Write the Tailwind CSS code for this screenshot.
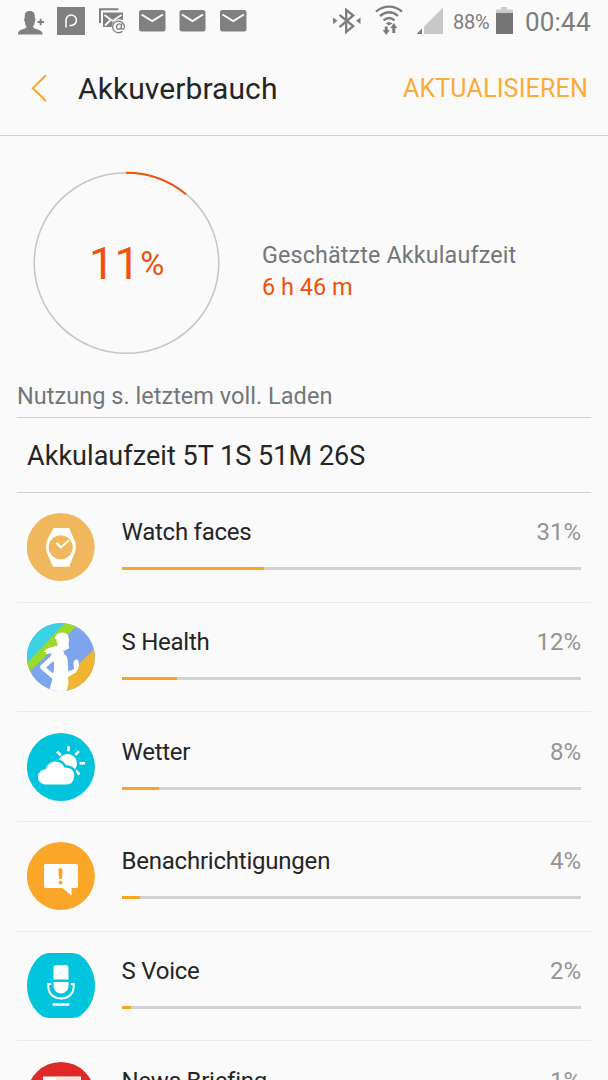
<!DOCTYPE html>
<html lang="de">
<head>
<meta charset="utf-8">
<title>Akkuverbrauch</title>
<script src="https://cdn.jsdelivr.net/npm/@tailwindcss/browser@4"></script>
</head>
<body class="w-[608px] h-[1080px] overflow-hidden bg-[#fafafa] font-['Roboto',sans-serif] text-[#252525]">
<div class="flex h-[1080px] flex-col overflow-hidden">
  <div class="flex h-[43px] shrink-0 items-center justify-between text-[#7d7d7d]">
    <svg class="h-[43px] w-[260px]" viewBox="0 0 260 43" fill="none">
      <path fill="#808080" d="M18 34.500c0-3 1-4 4-5 3-1 4.500-1.500 4.500-3-1.200-1.500-1.500-3-1.700-5-1-1.500-1-3 0-3.500-.3-4.500 1-7 5-7s5.300 2.500 5 7c1 .5 1 2 0 3.500-.2 2-.5 3.500-1.700 5 0 1.500 1.500 2 4.500 3s5 2 5 5z"/>
      <path d="M37.500 22h6.500M40.700 18.700v6.600" stroke="#808080" stroke-width="2"/>
      <path fill="#808080" d="M57 7h28v28H57z"/>
      <path d="M66 27.500v-7.300a5.200 5.200 0 1 1 5.200 5.200h-1.700" stroke="#fff" stroke-width="1.500"/>
      <path d="M100 23V9.300h18.500" stroke="#808080" stroke-width="2"/>
      <path fill="#808080" d="M103 12.500h20v7l-9 7.500H103z"/>
      <path d="m104.500 15 8 6 9-6M105 25.500l5-5" stroke="#fafafa" stroke-width="1.800"/>
      <circle cx="119" cy="26.500" r="7.200" fill="#fafafa"/>
      <path d="M122.500 31.300a6 5.800 0 1 1 2-4.800c0 3.300-3.300 3.700-3.200 1.200l.5-4M121.500 26.200c-.2 3.500-5 4-5 .8 0-3.800 5-4.300 5-.8z" stroke="#808080" stroke-width="1.300"/>
      <g fill="#808080"><rect x="139" y="10" width="26.500" height="21.500" rx="2.500"/><rect x="179.500" y="10" width="26" height="21.500" rx="2.500"/><rect x="220" y="10" width="26.500" height="21.500" rx="2.500"/></g>
      <path d="m141.500 14.500 10.700 6.500 10.700-6.500M182 14.500l10.500 6.500 10.500-6.500M222.500 14.500l10.700 6.500 10.700-6.500" stroke="#fafafa" stroke-width="2"/>
    </svg>
    <div class="flex h-full items-center">
      <svg class="h-[43px] w-[118px]" viewBox="330 0 118 43" fill="none">
        <path d="m339.500 14.800 13.700 11.200-7 6V9.800l7 5.700-13.700 11.600" stroke="#7d7d7d" stroke-width="2.300"/>
        <path fill="#7d7d7d" d="m333 17.500 4.500 3.300-4.500 3.200zM360.500 17.500l-4.500 3.300 4.500 3.200z"/>
        <path d="M376 11.500c8-6.500 18-6.500 26 0M380 16c6-4.800 12.500-4.800 18 0M383.500 20.300c3.700-3 7.500-3 11 0" stroke="#7d7d7d" stroke-width="2.300"/>
        <path fill="#7d7d7d" d="M385.500 23.500q3.500-3 7 0l-3.500 2zM384.700 26.500h3v3.500h2l-3.500 5-3.500-5h2zM392.300 33v-5h-2l3.500-5 3.500 5h-2v5z"/>
        <path fill="#c8c8c8" d="M443 7.500V34h-19V26.500z"/><path fill="#7d7d7d" d="M422 28.500V34h-5.500z"/>
      </svg>
      <span class="ml-[5px] w-[37px] whitespace-nowrap pt-px text-[20px] leading-[43px] tracking-[-0.2px]">88%</span>
      <svg class="ml-[5px] h-[43px] w-[18px]" viewBox="495 0 18 43"><path fill="#ccc" d="M496 9.500h5V7h6v2.500h6v5h-17z"/><path fill="#757575" d="M496 13h17v21h-17z"/></svg>
      <span class="ml-[12px] w-[83px] whitespace-nowrap pt-px text-[26px] leading-[43px] tracking-[0.2px]">00:44</span>
    </div>
  </div>
  <header class="flex h-[93px] shrink-0 items-center border-b-[1.500px] border-[#cfd1d0] pb-[2px] pl-[30px] pr-[20px]">
    <svg class="h-[30px] w-[18px]" viewBox="0 0 18 30" fill="none"><path d="M16 2.200 2.700 15.200 16 28" stroke="#faa52a" stroke-width="2"/></svg>
    <h1 class="ml-[30px] whitespace-nowrap pt-px text-[30px] leading-[36px] tracking-[0.08px]">Akkuverbrauch</h1>
    <span class="ml-auto whitespace-nowrap pt-[2px] text-[25px] leading-[36px] tracking-[0.18px] text-[#fbab38]">AKTUALISIEREN</span>
  </header>
  <section class="flex h-[240px] shrink-0 pl-[32px] pt-[35px]">
    <div class="grid h-[184px] w-[190px]">
      <svg class="col-start-1 row-start-1 h-[184px] w-[190px]" viewBox="32 171 190 184" fill="none">
        <ellipse cx="126.500" cy="263" rx="92.300" ry="90.300" stroke="#c6c6c6" stroke-width="1.600"/>
        <path d="M126 172.700A92.300 90.300 0 0 1 186 194.300" stroke="#ef5208" stroke-width="2"/>
      </svg>
      <div class="col-start-1 row-start-1 flex items-start pl-[57px] pt-[66px] text-[#ef5208]">
        <span class="text-[45px] leading-[53px] tracking-[0.3px]">11</span><span class="pt-[9px] text-[33px] leading-[36px]">%</span>
      </div>
    </div>
    <div class="flex flex-col pl-[40px] pt-[68px]">
      <p class="whitespace-nowrap text-[23.300px] leading-[32px] tracking-[0.15px] text-[#727679]">Geschätzte Akkulaufzeit</p>
      <p class="whitespace-nowrap text-[23.500px] leading-[32px] text-[#ef5208]">6 h 46 m</p>
    </div>
  </section>
  <main class="flex shrink-0 flex-col px-[17px]">
    <div class="h-[42px] border-b border-[#cfcfcf] text-[23.500px] leading-[41px] text-[#727679]"><span class="whitespace-nowrap tracking-[0.03px]">Nutzung s. letztem voll. Laden</span></div>
    <div class="h-[75px] border-b border-[#cfcfcf] pl-[10px] text-[27px] leading-[76px]"><span class="whitespace-nowrap tracking-[0.04px]">Akkulaufzeit 5T 1S 51M 26S</span></div>
    <div class="flex h-[109.700px] items-start border-b border-[#ebebeb] px-[10px] pt-[19px]">
      <svg class="h-[70px] w-[68px] shrink-0" viewBox="27 512 68 70" fill="none"><circle cx="60.700" cy="547" r="34" fill="#f1b75d"/><path fill="#fff" d="M53.700 528h15.500l3.500 8.300q6.500 10.700 0 21.500L69.200 566.800H53.200l-4.200-9q-6-10.800 0-21.500z"/><circle cx="60.700" cy="547.200" r="12" fill="#f1b75d"/><path d="m56.500 542.800 4.300 4.600 8-7" stroke="#fff" stroke-width="2"/></svg>
      <div class="ml-[26.500px] flex w-[459.500px] flex-col"><div class="flex h-[55px] justify-between leading-[40px]"><span class="text-[24px] tracking-[-0.250px]">Watch faces</span><span class="text-[24px] text-[#949494]">31%</span></div><div class="h-[3px] bg-[#d2d2d2]"><div class="h-[3px] w-[142px] bg-[#f9a523]"></div></div></div>
    </div>
    <div class="flex h-[109.700px] items-start border-b border-[#ebebeb] px-[10px] pt-[19px]">
      <svg class="h-[70px] w-[68px] shrink-0" viewBox="0 0 68 70"><defs><clipPath id="disc"><circle cx="33.900" cy="35" r="34"/></clipPath></defs><g clip-path="url(#disc)"><path fill="#7da5ed" d="M0 0h68v70H0z"/><path fill="#3dd1e6" d="M0 0h40v5L0 42z"/><path fill="#9bd92b" d="M38 1 0 41v11l51-49z"/><path fill="#efb431" d="M68 26 34 60v10h34z"/><path fill="#fff" d="M27.500 17q1-6.500 7.500-6.500 7 0 7 7l-.5 5.500.8 3q-.8 1-2.300 1-1 2-3.500 1.500-.5 3 2.500 5 2 2.500 1.800 9l.7 7 5.500-2.500-.5-5q-.3-4.500 3.500-4.500 1.500 0 1.500 2l.5 4q-.5 4-3 7L41 55l.5 6-2 9H22l2-8 1.500-5L14 47q-2-2 0-4l9-8 2-3.500-7 .5 2.500-1.500-4-.5 3.500-3.500 10.500-3q.5-1.500-.5-2.500-.5-2-.5-4z"/><path fill="#7da5ed" d="m19 45.500 7.500-6.500q1.500 6-.5 12.500z"/></g></svg>
      <div class="ml-[26.500px] flex w-[459.500px] flex-col"><div class="flex h-[55px] justify-between leading-[40px]"><span class="text-[24px] tracking-[-0.250px]">S Health</span><span class="text-[24px] text-[#949494]">12%</span></div><div class="h-[3px] bg-[#d2d2d2]"><div class="h-[3px] w-[55px] bg-[#f9a523]"></div></div></div>
    </div>
    <div class="flex h-[109.700px] items-start border-b border-[#ebebeb] px-[10px] pt-[19.500px]">
      <svg class="h-[70px] w-[68px] shrink-0" viewBox="0 0 68 70" fill="none"><circle cx="33.900" cy="35" r="34" fill="#02c5dd"/><circle cx="40.500" cy="31.500" r="9.500" fill="#fff"/><path d="M41.500 14.200v5M51.800 19.200l-3.500 3.800M58 31.200h-5.500M48.500 38.500l4 4M30 19.500l3.800 3.700" stroke="#fff" stroke-width="2.600"/><path d="M18 52.500a7.600 7.600 0 0 1 1-15.200q.5-2 .8-2.700a9.800 9.800 0 0 1 17.600 1q10.500 0 9.800 9.200-.8 7.700-8.200 7.700z" fill="#fff" stroke="#02c5dd" stroke-width="5" paint-order="stroke"/></svg>
      <div class="ml-[26.500px] flex w-[459.500px] flex-col"><div class="flex h-[55px] justify-between leading-[40px]"><span class="text-[24px] tracking-[-0.250px]">Wetter</span><span class="text-[24px] text-[#949494]">8%</span></div><div class="h-[3px] bg-[#d2d2d2]"><div class="h-[3px] w-[37px] bg-[#f9a523]"></div></div></div>
    </div>
    <div class="flex h-[109.700px] items-start border-b border-[#ebebeb] px-[10px] pt-[19px]">
      <svg class="h-[70px] w-[68px] shrink-0" viewBox="0 0 68 70"><circle cx="33.900" cy="35" r="34" fill="#faa628"/><path fill="#fff" d="M19 23h30q2 0 2 2v20q0 2-2 2h-4.500v7.500L35.500 47H19q-2 0-2-2V25q0-2 2-2z"/><path fill="#faa628" d="M33.500 27q2.300 0 2.100 2.500l-.6 8.500h-3l-.6-8.500q-.2-2.500 2.100-2.500z"/><circle cx="33.500" cy="41.500" r="2" fill="#faa628"/></svg>
      <div class="ml-[26.500px] flex w-[459.500px] flex-col"><div class="flex h-[55px] justify-between leading-[40px]"><span class="text-[24px] tracking-[-0.220px]">Benachrichtigungen</span><span class="text-[24px] text-[#949494]">4%</span></div><div class="h-[3px] bg-[#d2d2d2]"><div class="h-[3px] w-[18px] bg-[#f9a523]"></div></div></div>
    </div>
    <div class="flex h-[109.700px] items-start border-b border-[#ebebeb] px-[10px] pt-[19px]">
      <svg class="h-[70px] w-[68px] shrink-0" viewBox="0 0 68 70" fill="none"><path fill="#02c5dd" d="M22 2h24q8 0 15 10 7 10 7 23 0 12-7 22-7 10-15 10H22q-8 0-15-10Q0 47 0 35 0 22 7 12 14 2 22 2z"/><path fill="#fff" d="M29.500 14h9q3 0 3 3v11.500h-15V17q0-3 3-3zM26.500 31h15v4a7.500 7.500 0 0 1-15 0z"/><path d="M24.300 33h-3v2.500c0 16 25.400 16 25.400 0V33h-3" stroke="#fff" stroke-width="2"/><path d="M26.500 53.500h15" stroke="#fff" stroke-width="2.400" stroke-linecap="round"/></svg>
      <div class="ml-[26.500px] flex w-[459.500px] flex-col"><div class="flex h-[55px] justify-between leading-[40px]"><span class="text-[24px] tracking-[-0.250px]">S Voice</span><span class="text-[24px] text-[#949494]">2%</span></div><div class="h-[3px] bg-[#d2d2d2]"><div class="h-[3px] w-[9px] bg-[#f9a523]"></div></div></div>
    </div>
    <div class="flex h-[109.700px] items-start px-[10px] pt-[19.500px]">
      <svg class="h-[70px] w-[68px] shrink-0" viewBox="0 0 68 70"><circle cx="33.900" cy="35" r="34" fill="#df2828"/><path fill="#fff" d="M16 15.500h38v38H16z"/><path fill="#fbe4e0" d="M29 16.500h24v10H29z"/></svg>
      <div class="ml-[26.500px] flex w-[459.500px] flex-col"><div class="flex h-[55px] justify-between leading-[40px]"><span class="text-[24px] tracking-[-0.250px]">News Briefing</span><span class="text-[24px] text-[#949494]">1%</span></div><div class="h-[3px] bg-[#d2d2d2]"></div></div>
    </div>
  </main>
</div>
</body>
</html>
